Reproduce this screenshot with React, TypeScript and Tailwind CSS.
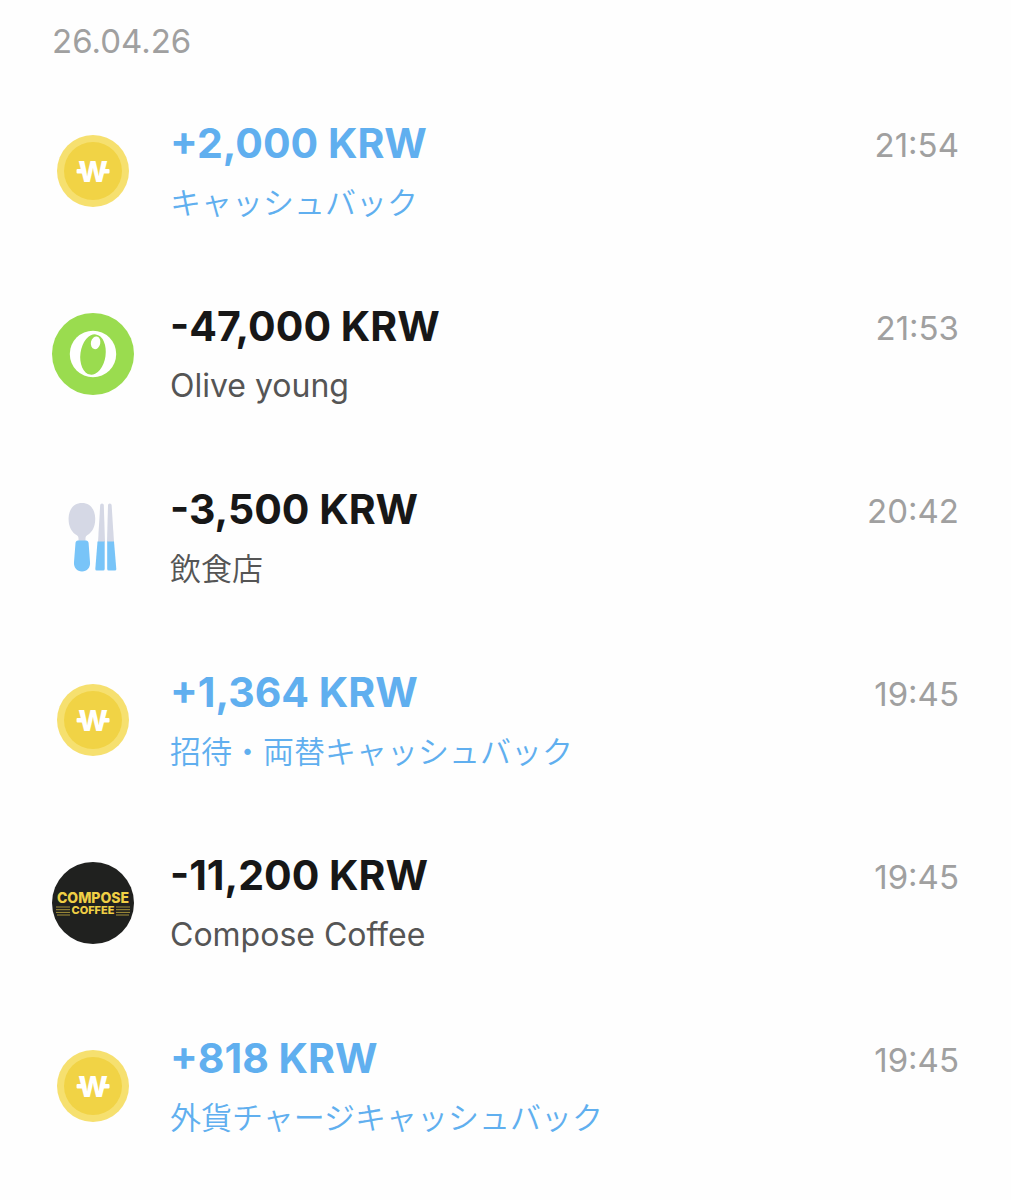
import type { ReactNode } from 'react';
import { clsx } from 'clsx';

interface Transaction {
  id: number;
  amount: string;
  label: string;
  time: string;
  icon: ReactNode;
  // Japanese labels are set slightly smaller than latin ones
  japanese?: boolean;
}

function CoinIcon() {
  return (
    <svg viewBox="0 0 82 82" className="size-full" aria-hidden="true">
      <circle cx="41" cy="41" r="36" fill="#f6e06f" />
      <circle cx="41" cy="41" r="29" fill="#f1d345" />
      <g fill="#fff">
        {/* Won sign: the bar only shows on the outer sides of the W */}
        <rect x="24.5" y="39" width="7" height="4.5" rx="1" />
        <rect x="50.5" y="39" width="7" height="4.5" rx="1" />
        <text
          x="41"
          y="51.5"
          textAnchor="middle"
          className="font-['Inter',sans-serif] text-[28px] font-extrabold"
        >
          W
        </text>
      </g>
    </svg>
  );
}

function OliveYoungIcon() {
  return (
    <svg viewBox="0 0 82 82" className="size-full" aria-hidden="true">
      <circle cx="41" cy="41" r="41" fill="#9adc4f" />
      <circle cx="41" cy="41" r="23.2" fill="#fff" />
      <ellipse cx="41" cy="41.5" rx="12.6" ry="20.3" fill="#9adc4f" transform="rotate(8 41 41.5)" />
      <ellipse cx="43.6" cy="29.8" rx="4.7" ry="6.4" fill="#fff" transform="rotate(12 43.6 29.8)" />
    </svg>
  );
}

function RestaurantIcon() {
  return (
    <svg viewBox="0 0 82 82" className="size-full" aria-hidden="true">
      {/* Spoon */}
      <path
        d="M30 7C22 7 17 13 16.6 22C16.3 31 20 36.5 24.5 39C26 39.8 26.5 41 26.5 42.5V47H33.5V42.5C33.5 41 34 39.8 35.5 39C40 36.5 43.5 31 43.2 22C42.8 13 38 7 30 7Z"
        fill="#d5d8e5"
      />
      <path
        d="M26 44.5H34C35.5 44.5 36.4 45.4 36.6 47L38 66C38.6 71.5 35 75.5 30 75.5C25 75.5 21.5 71.5 22 66L23.5 47C23.7 45.4 24.5 44.5 26 44.5Z"
        fill="#78c4f8"
      />
      {/* Chopsticks */}
      <path d="M48.2 9Q48.3 7.5 50 7.5Q51.7 7.5 51.8 9L53 46H46Z" fill="#d5d8e5" />
      <path d="M56 9Q56.1 7.5 57.8 7.5Q59.5 7.5 59.6 9L62 46H55Z" fill="#d5d8e5" />
      <path d="M45.5 45.5H52.7V73Q52.7 74.5 51.2 74.5H44.8Q43.2 74.5 43.3 73Z" fill="#78c4f8" />
      <path d="M55.2 45.5H62L64.3 73Q64.4 74.5 62.8 74.5H56.7Q55.2 74.5 55.2 73Z" fill="#78c4f8" />
    </svg>
  );
}

function ComposeCoffeeIcon() {
  return (
    <svg viewBox="0 0 82 82" className="size-full" aria-hidden="true">
      <circle cx="41" cy="41" r="41" fill="#20211f" />
      <text
        fill="#f0cf45"
        textAnchor="middle"
        className="font-['Inter',sans-serif] font-extrabold"
      >
        <tspan x="41" y="41" className="text-[14px]">
          COMPOSE
        </tspan>
        <tspan x="41" y="52" className="text-[11px]">
          COFFEE
        </tspan>
      </text>
      <path
        d="M4 45H18M4 47.7H18M4 50.4H18M5 53H18M64 45H78M64 47.7H78M64 50.4H78M64 53H77"
        stroke="#b69e3c"
        strokeWidth="0.9"
      />
    </svg>
  );
}

const transactions: Transaction[] = [
  { id: 1, amount: '+2,000 KRW', label: 'キャッシュバック', time: '21:54', icon: <CoinIcon />, japanese: true },
  { id: 2, amount: '-47,000 KRW', label: 'Olive young', time: '21:53', icon: <OliveYoungIcon /> },
  { id: 3, amount: '-3,500 KRW', label: '飲食店', time: '20:42', icon: <RestaurantIcon />, japanese: true },
  { id: 4, amount: '+1,364 KRW', label: '招待・両替キャッシュバック', time: '19:45', icon: <CoinIcon />, japanese: true },
  { id: 5, amount: '-11,200 KRW', label: 'Compose Coffee', time: '19:45', icon: <ComposeCoffeeIcon /> },
  { id: 6, amount: '+818 KRW', label: '外貨チャージキャッシュバック', time: '19:45', icon: <CoinIcon />, japanese: true },
];

function TransactionRow({ transaction }: { transaction: Transaction }) {
  const { amount, label, time, icon, japanese } = transaction;
  const isCredit = amount.startsWith('+');

  return (
    <li className="flex items-center">
      <div className="size-[82px] shrink-0">{icon}</div>
      <div className="ml-9 min-w-0 flex-1">
        <p
          className={clsx(
            'text-[41px] leading-[56px] font-bold',
            isCredit ? 'text-[#60afef]' : 'text-[#171717]'
          )}
        >
          {amount}
        </p>
        <p
          className={clsx(
            'mt-2 leading-[48px]',
            japanese ? 'text-[31px] font-[350]' : 'text-[32px]',
            isCredit ? 'text-[#60afef]' : 'text-[#555555]'
          )}
        >
          {label}
        </p>
      </div>
      <time className="self-start text-[33px] leading-[60px] text-[#a0a0a0]">{time}</time>
    </li>
  );
}

export default function App() {
  return (
    <main
      lang="ja"
      className="min-h-screen bg-[#fefefe] px-[52px] pt-[17px] pb-12 font-['Inter','Noto_Sans_CJK_JP',sans-serif]"
    >
      <h1 className="text-[33px] leading-[48px] text-[#a0a0a0]">26.04.26</h1>
      <ul className="mt-[50px] flex flex-col gap-[71px]">
        {transactions.map((transaction) => (
          <TransactionRow key={transaction.id} transaction={transaction} />
        ))}
      </ul>
    </main>
  );
}
